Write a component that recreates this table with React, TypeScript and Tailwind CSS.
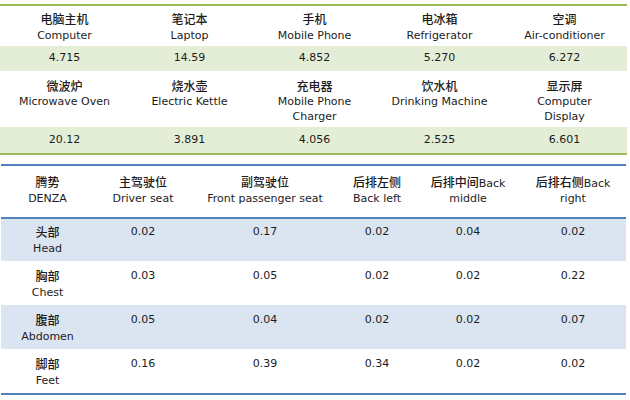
import React from "react";

const Z = ({ children }: { children: React.ReactNode }) => (
  <span className="text-[12px] font-medium font-['Noto_Sans_CJK_SC',sans-serif]">{children}</span>
);

type Cell = React.ReactNode;

const topHead1: Cell[] = [
  <><Z>电脑主机</Z><br />Computer</>,
  <><Z>笔记本</Z><br />Laptop</>,
  <><Z>手机</Z><br />Mobile Phone</>,
  <><Z>电冰箱</Z><br />Refrigerator</>,
  <><Z>空调</Z><br />Air-conditioner</>,
];
const topVals1 = ["4.715", "14.59", "4.852", "5.270", "6.272"];
const topHead2: Cell[] = [
  <><Z>微波炉</Z><br />Microwave Oven</>,
  <><Z>烧水壶</Z><br />Electric Kettle</>,
  <><Z>充电器</Z><br />Mobile Phone<br />Charger</>,
  <><Z>饮水机</Z><br />Drinking Machine</>,
  <><Z>显示屏</Z><br />Computer<br />Display</>,
];
const topVals2 = ["20.12", "3.891", "4.056", "2.525", "6.601"];

const botHead: Cell[] = [
  <><Z>腾势</Z><br />DENZA</>,
  <><Z>主驾驶位</Z><br />Driver seat</>,
  <><Z>副驾驶位</Z><br />Front passenger seat</>,
  <><Z>后排左侧</Z><br />Back left</>,
  <><Z>后排中间</Z>Back<br />middle</>,
  <><Z>后排右侧</Z>Back<br />right</>,
];

const rows: { label: Cell; vals: string[]; band: boolean; first?: boolean }[] = [
  { label: <><Z>头部</Z><br />Head</>, vals: ["0.02", "0.17", "0.02", "0.04", "0.02"], band: true, first: true },
  { label: <><Z>胸部</Z><br />Chest</>, vals: ["0.03", "0.05", "0.02", "0.02", "0.22"], band: false },
  { label: <><Z>腹部</Z><br />Abdomen</>, vals: ["0.05", "0.04", "0.02", "0.02", "0.07"], band: true },
  { label: <><Z>脚部</Z><br />Feet</>, vals: ["0.16", "0.39", "0.34", "0.02", "0.02"], band: false },
];

const topGrid = "grid grid-cols-[repeat(5,125px)] pl-[2px]";
const botGrid = "grid grid-cols-[93px_98px_146px_78px_104px_106px]";

export default function App() {
  return (
    <div className="w-[630px] h-[400px] bg-white overflow-hidden text-[#1c1c1c] text-[11px] font-['DejaVu_Sans','Noto_Sans_CJK_SC',sans-serif]">
      {/* Top table */}
      <div className="w-[627px] mt-[4px] border-t-2 border-b-2 border-[#9bbb59]">
        <div className={`${topGrid} h-[40px] pt-[5px] leading-[15px] text-center`}>
          {topHead1.map((c, i) => (
            <div key={i} className="whitespace-nowrap">{c}</div>
          ))}
        </div>
        <div className={`${topGrid} h-[25px] items-center bg-[#e4eed7] text-center`}>
          {topVals1.map((v, i) => (
            <div key={i}>{v}</div>
          ))}
        </div>
        <div className={`${topGrid} h-[56px] pt-[7.5px] leading-[14.5px] text-center`}>
          {topHead2.map((c, i) => (
            <div key={i} className="whitespace-nowrap">{c}</div>
          ))}
        </div>
        <div className={`${topGrid} h-[26px] items-center bg-[#e4eed7] text-center`}>
          {topVals2.map((v, i) => (
            <div key={i}>{v}</div>
          ))}
        </div>
      </div>

      {/* Bottom table */}
      <div className="w-[625px] ml-[1px] mt-[9px] border-t-2 border-b-2 border-[#4f81bd]">
        <div className={`${botGrid} h-[53px] pt-[7.5px] leading-[15px] text-center border-b-2 border-[#4f81bd]`}>
          {botHead.map((c, i) => (
            <div key={i} className="whitespace-nowrap">{c}</div>
          ))}
        </div>
        {rows.map((r, ri) => (
          <div
            key={ri}
            className={`${botGrid} ${r.first ? "h-[42px] pt-[6px]" : "h-[44px] pt-[8px]"} leading-[14.5px] text-center ${r.band ? "bg-[#dbe5f1]" : ""}`}
          >
            <div className="whitespace-nowrap">{r.label}</div>
            {r.vals.map((v, i) => (
              <div key={i}>{v}</div>
            ))}
          </div>
        ))}
      </div>
    </div>
  );
}
